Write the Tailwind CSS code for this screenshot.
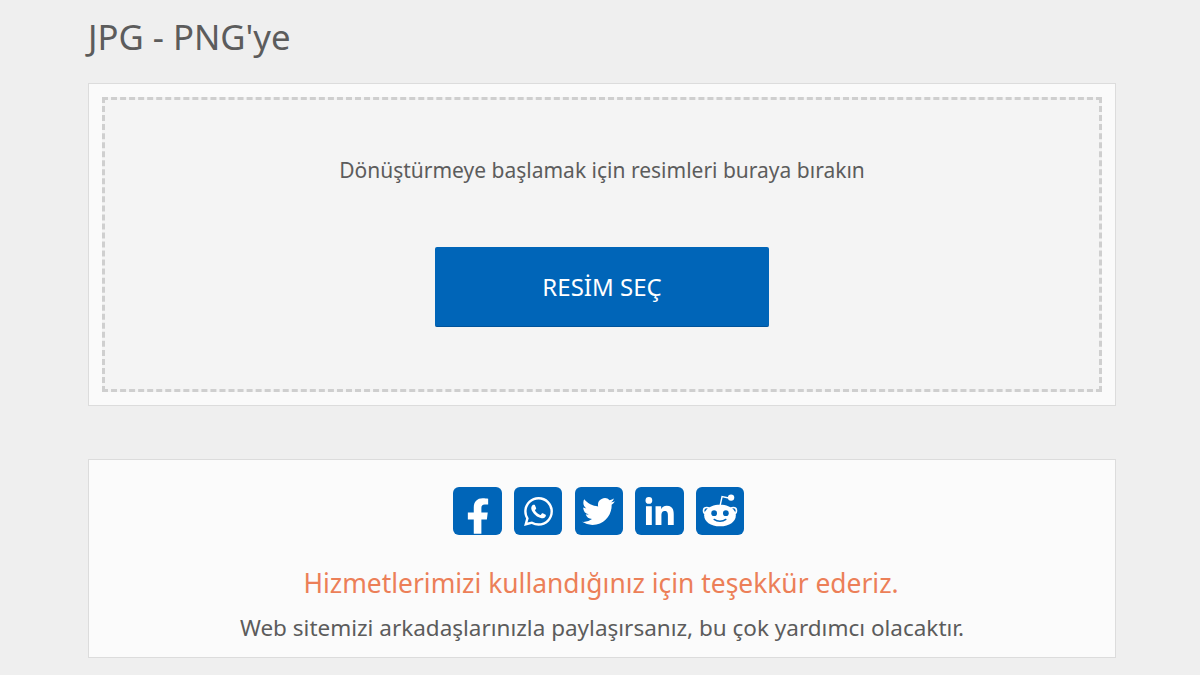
<!DOCTYPE html>
<html lang="tr">
<head>
<meta charset="UTF-8">
<title>JPG - PNG'ye</title>
<script src="https://cdn.jsdelivr.net/npm/@tailwindcss/browser@4"></script>
</head>
<body class="bg-[#efefef] font-['Noto_Sans','Open_Sans',sans-serif] text-[#5c5c5c] h-[675px] overflow-hidden">
<div class="w-[1028px] ml-[88px]">
  <h1 class="text-[34.7px] leading-[45px] pt-[14px] h-[83px]">JPG - PNG'ye</h1>

  <div class="h-[323px] bg-[#fafafa] border border-[#dcdcdc] p-[13px]">
    <div class="h-full bg-[#f4f4f4] border-[3px] border-dashed border-[#cfcfcf] flex flex-col items-center">
      <p class="mt-[54px] text-[21px] leading-[32px]">Dönüştürmeye başlamak için resimleri buraya bırakın</p>
      <button class="mt-[61px] w-[334px] h-[80px] bg-[#0065b8] border-b border-[#00539a] rounded-[2px] text-white text-[24px]">RESİM SEÇ</button>
    </div>
  </div>

  <div class="mt-[53px] h-[199px] bg-[#fbfbfb] border border-[#dcdcdc] flex flex-col items-center">
    <div class="mt-[27px] mr-[7px] flex gap-[12.5px]">
      <a class="w-[48.500px] h-[48px] rounded-[6px] bg-[#0065b8] flex items-end justify-center overflow-hidden">
        <svg width="22" height="38" viewBox="0 0 26 42" fill="#fff" class="ml-[2px]"><path d="M8 42V25H1v-8h7v-6C8 4 12 0 18.500 0c2.500 0 5 .3 6.500.5v7h-4c-3 0-4 1.500-4 4V17h7.500l-1 8H17v17z"/></svg>
      </a>
      <a class="w-[48px] h-[48px] rounded-[6px] bg-[#0065b8] flex items-center justify-center">
        <svg width="29" height="29" viewBox="0 0 24 24" fill="#fff"><path d="M17.500 14.400c-.3-.15-1.770-.87-2.040-.97-.27-.1-.47-.15-.67.15-.2.300-.77.970-.95 1.170-.17.200-.35.220-.65.070-.3-.15-1.260-.46-2.400-1.480-.89-.79-1.490-1.770-1.660-2.070-.17-.3-.02-.46.130-.61.130-.13.300-.35.450-.52.150-.17.200-.3.300-.5.100-.2.050-.37-.02-.52-.08-.15-.67-1.620-.92-2.220-.24-.58-.49-.5-.67-.51h-.57c-.2 0-.52.070-.79.370-.27.300-1.040 1.020-1.040 2.490s1.070 2.890 1.220 3.090c.15.200 2.100 3.200 5.080 4.490.71.310 1.260.49 1.690.63.710.23 1.360.190 1.870.120.570-.09 1.770-.72 2.020-1.420.25-.7.250-1.300.17-1.420-.07-.13-.27-.2-.57-.35zM12.050 21.800h0a9.900 9.900 0 0 1-5.040-1.380l-.36-.21-3.750.98 1-3.650-.24-.37a9.860 9.860 0 0 1-1.510-5.260c0-5.450 4.440-9.880 9.900-9.880a9.880 9.880 0 0 1 9.890 9.890c0 5.450-4.440 9.880-9.890 9.880zM20.470 3.480A11.820 11.820 0 0 0 12.050 0C5.490 0 .16 5.340.16 11.890c0 2.100.55 4.140 1.590 5.950L.05 24l6.300-1.650a11.880 11.880 0 0 0 5.690 1.450h0c6.550 0 11.890-5.340 11.890-11.890a11.820 11.820 0 0 0-3.480-8.430z"/></svg>
      </a>
      <a class="w-[48px] h-[48px] rounded-[6px] bg-[#0065b8] flex items-center justify-center">
        <svg width="33" height="33" viewBox="0 0 24 24" fill="#fff"><path d="M23.950 4.570a10 10 0 0 1-2.820.77 4.960 4.960 0 0 0 2.160-2.720c-.95.550-2 .96-3.130 1.190a4.920 4.920 0 0 0-8.380 4.480C7.690 8.090 4.070 6.130 1.640 3.160a4.820 4.820 0 0 0-.67 2.480c0 1.710.87 3.210 2.190 4.100a4.900 4.900 0 0 1-2.230-.62v.06a4.920 4.920 0 0 0 3.950 4.830 5 5 0 0 1-2.210.08 4.940 4.940 0 0 0 4.600 3.420A9.870 9.870 0 0 1 0 19.540a14 14 0 0 0 7.560 2.210c9.050 0 14-7.500 14-13.980 0-.21 0-.42-.02-.63a9.940 9.940 0 0 0 2.410-2.550z"/></svg>
      </a>
      <a class="w-[48.500px] h-[48px] rounded-[6px] bg-[#0065b8] flex items-center justify-center">
        <svg width="29" height="28" viewBox="0 0 24 24" fill="#fff"><path d="M.4 8h5v16h-5zM2.900 0a2.900 2.900 0 1 1 0 5.800 2.900 2.900 0 0 1 0-5.800zM8.600 8h4.800v2.200h.07c.67-1.260 2.300-2.600 4.730-2.600 5.060 0 6 3.330 6 7.660V24h-5v-7.750c0-1.850-.03-4.230-2.580-4.230-2.580 0-2.970 2.020-2.970 4.100V24h-5z"/></svg>
      </a>
      <a class="w-[48px] h-[48px] rounded-[6px] bg-[#0065b8] flex items-center justify-center">
        <svg width="38" height="38" viewBox="0 0 24 24"><circle cx="3.600" cy="11.800" r="2.500" fill="#fff"/><circle cx="20.400" cy="11.800" r="2.500" fill="#fff"/><circle cx="3.600" cy="11.800" r="1.500" fill="#0065b8"/><circle cx="20.400" cy="11.800" r="1.500" fill="#0065b8"/><path fill="#fff" d="M12 8.100c6 0 10 3 10 6.700s-4 6.900-10 6.900S2 18.500 2 14.800s4-6.700 10-6.700z"/><path fill="none" stroke="#fff" stroke-width=".9" d="M12.100 8.500l1.200-5.600 4.200.9"/><circle cx="19" cy="3.500" r="2" fill="#fff"/><circle cx="8.300" cy="13.400" r="1.800" fill="#0065b8"/><circle cx="15.700" cy="13.400" r="1.800" fill="#0065b8"/><path fill="none" stroke="#0065b8" stroke-width=".9" stroke-linecap="round" d="M8.300 17.300c2 1.600 5.400 1.600 7.400 0"/></svg>
      </a>
    </div>
    <p class="mt-[26px] mr-[2px] text-[26.400px] leading-[44px] text-[#ec7f58]">Hizmetlerimizi kullandığınız için teşekkür ederiz.</p>
    <p class="mt-[8px] text-[22.500px] leading-[30px]">Web sitemizi arkadaşlarınızla paylaşırsanız, bu çok yardımcı olacaktır.</p>
  </div>
</div>
</body>
</html>
